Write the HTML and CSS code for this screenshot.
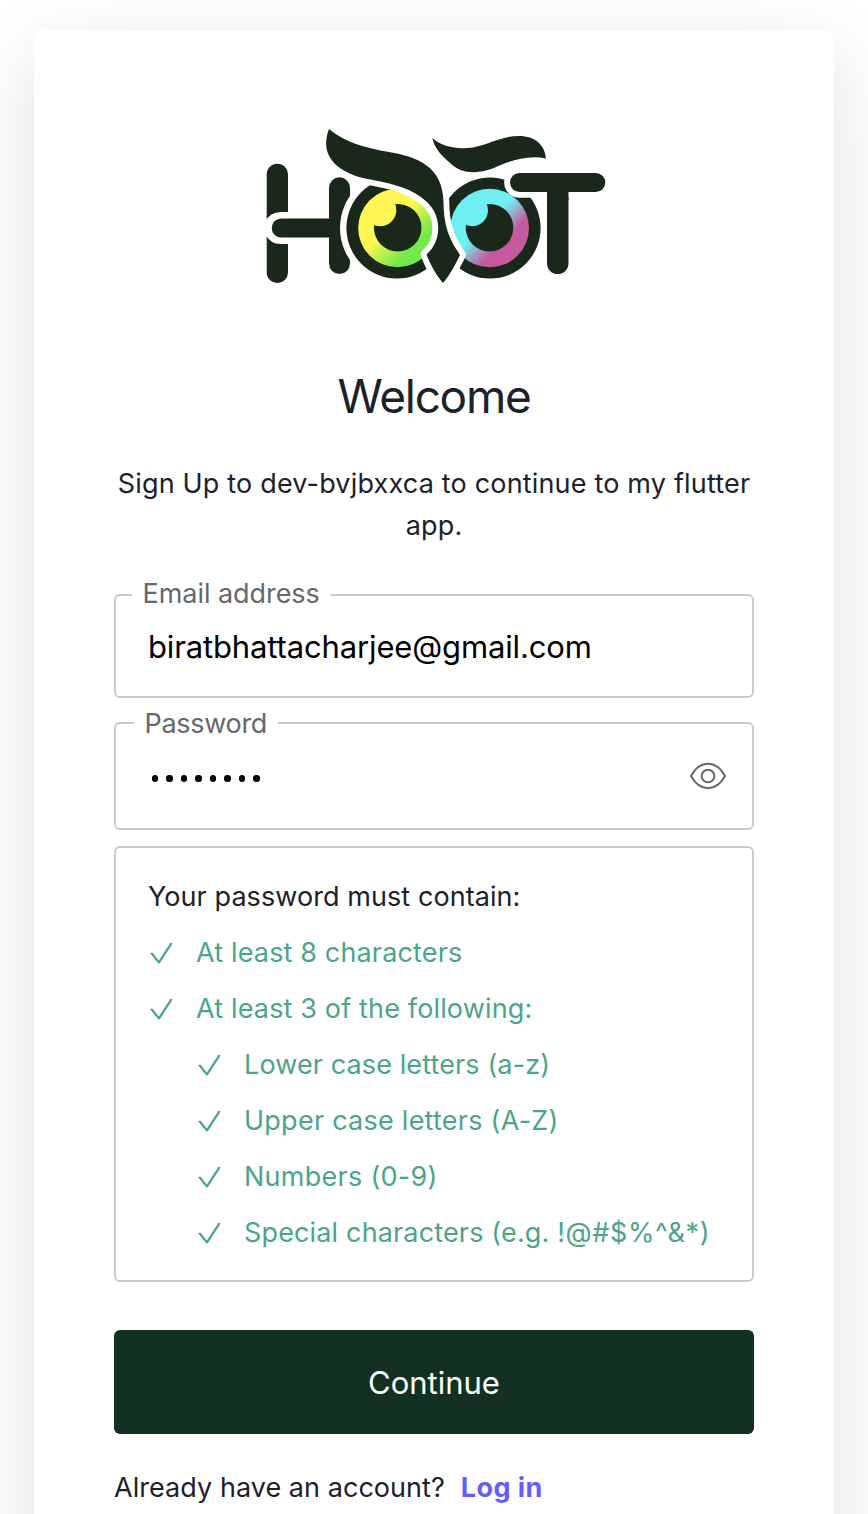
FILE: index.html
```html
<!DOCTYPE html>
<html lang="en">
<head>
<meta charset="utf-8">
<title>Sign up</title>
<link rel="stylesheet" href="styles.css">
</head>
<body>
<svg class="defs" width="0" height="0" aria-hidden="true">
  <symbol id="check" viewBox="0 0 26 26"><path d="M3.700 13.600 L11 22.400 L23.200 3.700" fill="none" stroke="currentColor" stroke-width="2.300" stroke-linecap="round" stroke-linejoin="round"/></symbol>
</svg>
<main class="card">
  <svg class="logo" viewBox="256 120 360 170" role="img" aria-label="Hoot">
    <defs>
      <linearGradient id="lime" gradientUnits="userSpaceOnUse" x1="369" y1="200" x2="425" y2="256"><stop offset=".42" stop-color="#fdf654"/><stop offset=".82" stop-color="#73e84a"/></linearGradient>
      <linearGradient id="aqua" gradientUnits="userSpaceOnUse" x1="462" y1="200" x2="518" y2="256"><stop offset=".44" stop-color="#6eeff1"/><stop offset=".74" stop-color="#c65a9f"/></linearGradient>
      <clipPath id="pupilLeft"><circle cx="397.700" cy="227.700" r="25"/></clipPath>
      <clipPath id="pupilRight"><circle cx="489.500" cy="227.700" r="25"/></clipPath>
    </defs>
    <g fill="#1a281c">
      <rect x="266.700" y="163.700" width="21.300" height="119.300" rx="10.600"/>
      <rect x="329" y="177.300" width="21" height="96.700" rx="10.500"/>
      <path d="M331 212H281Q270 212 265 222V234Q270 244 281 244H331Z" fill="#fff"/>
      <rect x="329" y="205" width="21" height="46"/>
      <path d="M335 218.500H281.200a9.500 9.500 0 0 0 0 19H335Z"/>
      <circle cx="397" cy="228" r="57" fill="#fff"/>
      <circle cx="397" cy="228" r="50.600"/>
      <circle cx="490" cy="228" r="50.600"/>
    </g>
    <circle cx="397.500" cy="228" r="39.300" fill="url(#lime)"/>
    <circle cx="489.700" cy="228" r="39.300" fill="url(#aqua)"/>
    <circle cx="397.700" cy="227.700" r="23.800" fill="#1a281c"/>
    <circle cx="489.500" cy="227.700" r="23.800" fill="#1a281c"/>
    <circle cx="380.300" cy="210.200" r="16" fill="#fdf654" clip-path="url(#pupilLeft)"/>
    <circle cx="472" cy="210.200" r="16" fill="#6eeff1" clip-path="url(#pupilRight)"/>
    <g fill="#1a281c" stroke="#fff" stroke-width="11.600" stroke-linejoin="round" paint-order="stroke">
      <path d="M329 129C344 142 366 148 389 152C417 157 443 166 443.500 202C443.500 225 449 239 460 255C455 265 450 275 443 283C436 275 430 264 426.500 254.500C442 241 442 216 427 202C410 186 387 183 363 178C336 171 319 155 329 129Z"/>
      <path d="M547 182H568.500V263.300A10.700 10.700 0 0 1 547 263.300Z"/>
      <rect x="510" y="173" width="95.300" height="19" rx="9.500"/>
    </g>
    <path d="M547 180h21.500v20h-21.500z" fill="#1a281c"/>
    <path d="M432.300 138C442 147 457 149.500 473 147.500C490 144 502 136 519 136C535 136 545 145 546 158.500C527 154 507 162 494 168C481 173 462 176 449 162C441 155 435 149 432.300 138Z" fill="#1a281c"/>
  </svg>
  <h1 class="title">Welcome</h1>
  <p class="intro">Sign Up to dev-bvjbxxca to continue to my flutter app.</p>
  <div class="field field-email">
    <label class="label">Email address</label>
    <span class="value">biratbhattacharjee@gmail.com</span>
  </div>
  <div class="field field-password">
    <label class="label">Password</label>
    <span class="dots"><i></i><i></i><i></i><i></i><i></i><i></i><i></i><i></i></span>
    <svg class="eye" viewBox="0 0 36 28" fill="none" stroke="#65676e" stroke-width="2"><path d="M1 14C10 -2.200 26 -2.200 35 14C26 30.200 10 30.200 1 14Z" stroke-linejoin="round"/><circle cx="18" cy="14" r="6.300"/></svg>
  </div>
  <section class="rules">
    <p class="rules-title">Your password must contain:</p>
    <ul class="list">
      <li><svg><use href="#check"/></svg><span>At least 8 characters</span></li>
      <li><svg><use href="#check"/></svg><span>At least 3 of the following:</span></li>
    </ul>
    <ul class="list nested">
      <li><svg><use href="#check"/></svg><span class="lower">Lower case letters (a-z)</span></li>
      <li><svg><use href="#check"/></svg><span class="upper">Upper case letters (A-Z)</span></li>
      <li><svg><use href="#check"/></svg><span class="numbers">Numbers (0-9)</span></li>
      <li><svg><use href="#check"/></svg><span>Special characters (e.g. <span class="symbols">!@#$%^&amp;*)</span></span></li>
    </ul>
  </section>
  <button class="continue" type="button">Continue</button>
  <p class="login"><span>Already have an account?</span><a>Log in</a></p>
</main>
</body>
</html>
```
FILE: styles.css
```css
* { box-sizing: border-box; }
html, body { height: 100%; }
body { margin: 0; overflow: hidden; background: #fff; color: #1e212a; font-family: Inter, "Liberation Sans", sans-serif; font-size: 27px; padding-top: 30px; }
p, h1, ul { margin: 0; padding: 0; }
.defs { position: absolute; }
.card { width: 800px; height: 1600px; margin: 0 auto; padding: 90px 80px 0; background: #fff; border-radius: 10px; box-shadow: 0 24px 80px rgba(0, 0, 0, .12); display: flex; flex-direction: column; }
.logo { width: 360px; height: 170px; margin-left: 142px; flex: none; }
.title { margin-top: 76px; height: 60px; line-height: 60px; font-size: 46px; font-weight: 400; text-align: center; letter-spacing: -1.3px; }
.intro { margin: 37px -5px 0; line-height: 42px; text-align: center; letter-spacing: .18px; }
.field { position: relative; flex: none; border: 2px solid #c9cace; border-radius: 6px; padding-left: 32px; display: flex; align-items: center; }
.field-email { margin-top: 47px; height: 104px; }
.field-password { margin-top: 24px; height: 108px; padding-right: 26px; justify-content: space-between; }
.label { position: absolute; top: -19px; left: 16px; padding: 0 11px 0 10.5px; background: #fff; color: #65676e; line-height: 34px; white-space: nowrap; letter-spacing: -.05px; }
.field-password .label { top: -17px; left: 18px; letter-spacing: -.3px; }
.value { color: #000; font-size: 31px; line-height: 40px; letter-spacing: -.14px; padding-top: 1px; }
.dots { display: flex; gap: 8px; padding-left: 3.5px; padding-top: 5px; }
.dots i { width: 6.5px; height: 6.5px; border-radius: 50%; background: #000; }
.eye { width: 36px; height: 28px; }
.rules { flex: none; margin-top: 16px; height: 436px; border: 2px solid #c9cace; border-radius: 6px; padding: 28px 32px 0; }
.rules-title { line-height: 42px; letter-spacing: .07px; }
.list { list-style: none; color: #4ca587; margin-top: 14px; display: flex; flex-direction: column; gap: 14px; }
.list li { display: flex; align-items: center; line-height: 42px; height: 42px; white-space: nowrap; letter-spacing: .15px; }
.list svg { width: 26px; height: 26px; margin-right: 22px; }
.nested { padding-left: 48px; }
.list .lower { letter-spacing: .11px; }
.list .upper { letter-spacing: .25px; }
.list .numbers { letter-spacing: .27px; }
.list .symbols { letter-spacing: .62px; }
.continue { flex: none; margin-top: 48px; height: 104px; padding: 0; border: 0; border-radius: 6px; background: #123122; color: #fff; font-family: inherit; font-size: 31px; }
.login { margin-top: 33px; line-height: 42px; display: flex; gap: 16px; letter-spacing: .05px; }
.login a { color: #635dff; font-weight: 700; letter-spacing: .4px; }
```
